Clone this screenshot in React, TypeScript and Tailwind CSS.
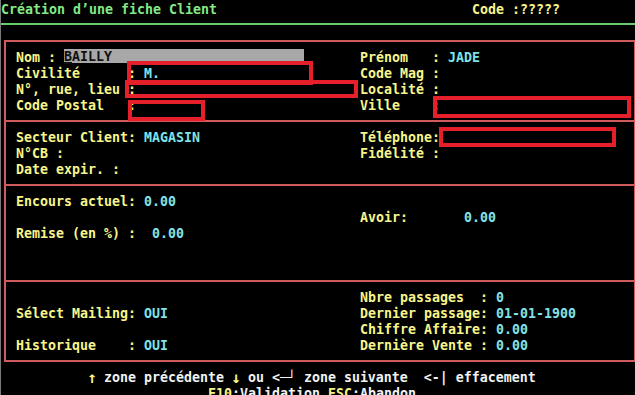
const Y = "text-[#f8f48c]"
const C = "text-[#7ee2ea]"

function Row({ left, right }: { left?: React.ReactNode; right?: React.ReactNode }) {
  return (
    <div className="flex h-4 items-center whitespace-pre">
      <div className="w-[344px] flex items-center translate-y-[2px]">{left}</div>
      <div className="flex items-center translate-y-[2px]">{right}</div>
    </div>
  )
}

function Mark({ className }: { className: string }) {
  return <div className={`absolute border-4 border-[#e6202a] ${className}`} />
}

function Arrow({ ch }: { ch: string }) {
  return <span className={`inline-flex w-2 justify-center overflow-visible text-[16px] leading-4 ${Y}`}>{ch}</span>
}

export default function App() {
  return (
    <div
      className="relative w-[635px] h-[395px] overflow-hidden bg-black border-l border-[#7a7a7a] font-bold text-[13.29px] leading-4"
      style={{ fontFamily: '"DejaVu Sans Mono", "Liberation Mono", monospace' }}
    >
      {/* title */}
      <div className="flex h-4 items-center whitespace-pre translate-y-[2px]">
        <div className="w-[471px] text-[#84e884]">Création d’une fiche Client</div>
        <div className={Y}>Code :?????</div>
      </div>
      <div className="flex h-4 items-center">
        <div className="h-[2px] w-full bg-[#6ccc6c]" />
      </div>

      {/* form box */}
      <div className="mt-2 ml-[3px] w-[632px] border-2 border-[#d05a5e]">
        <div className="pt-[6px] pb-[8px] pl-[10px] border-b-2 border-[#d05a5e]">
          <Row
            left={
              <>
                <span className={Y}>Nom : </span>
                <span className="flex h-[14px] w-[240px] -translate-y-[2px] items-center bg-[#a8a8a8] text-[#101010]">
                  <span className="translate-y-[1px]">
                    <span className="underline decoration-2 underline-offset-1">B</span>AILLY
                  </span>
                </span>
              </>
            }
            right={
              <>
                <span className={Y}>Prénom   : </span>
                <span className={C}>JADE</span>
              </>
            }
          />
          <Row
            left={
              <>
                <span className={Y}>Civilité      : </span>
                <span className={C}>M.</span>
              </>
            }
            right={<span className={Y}>Code Mag :</span>}
          />
          <Row left={<span className={Y}>N°, rue, lieu :</span>} right={<span className={Y}>Localité :</span>} />
          <Row left={<span className={Y}>Code Postal   :</span>} right={<span className={Y}>Ville    :</span>} />
        </div>

        <div className="pt-[6px] pb-[8px] pl-[10px] border-b-2 border-[#d05a5e]">
          <Row
            left={
              <>
                <span className={Y}>Secteur Client: </span>
                <span className={C}>MAGASIN</span>
              </>
            }
            right={<span className={Y}>Téléphone:</span>}
          />
          <Row left={<span className={Y}>N°CB :</span>} right={<span className={Y}>Fidélité :</span>} />
          <Row left={<span className={Y}>Date expir. :</span>} />
        </div>

        <div className="pt-[6px] pb-[8px] pl-[10px] border-b-2 border-[#d05a5e]">
          <Row
            left={
              <>
                <span className={Y}>Encours actuel: </span>
                <span className={C}>0.00</span>
              </>
            }
          />
          <Row
            right={
              <>
                <span className={Y}>Avoir:       </span>
                <span className={C}>0.00</span>
              </>
            }
          />
          <Row
            left={
              <>
                <span className={Y}>Remise (en %) :  </span>
                <span className={C}>0.00</span>
              </>
            }
          />
          <Row />
          <Row />
        </div>

        <div className="pt-[6px] pb-[8px] pl-[10px]">
          <Row
            right={
              <>
                <span className={Y}>Nbre passages  : </span>
                <span className={C}>0</span>
              </>
            }
          />
          <Row
            left={
              <>
                <span className={Y}>Sélect Mailing: </span>
                <span className={C}>OUI</span>
              </>
            }
            right={
              <>
                <span className={Y}>Dernier passage: </span>
                <span className={C}>01-01-1900</span>
              </>
            }
          />
          <Row
            right={
              <>
                <span className={Y}>Chiffre Affaire: </span>
                <span className={C}>0.00</span>
              </>
            }
          />
          <Row
            left={
              <>
                <span className={Y}>Historique    : </span>
                <span className={C}>OUI</span>
              </>
            }
            right={
              <>
                <span className={Y}>Dernière Vente : </span>
                <span className={C}>0.00</span>
              </>
            }
          />
        </div>
      </div>

      {/* footer */}
      <div className="mt-[6px] flex h-4 items-center whitespace-pre pl-[87px] text-[#f2f2f2] translate-y-[2px]">
        <Arrow ch="↑" /> zone précédente <Arrow ch="↓" /> ou &lt;─┘ zone suivante  &lt;-| effacement
      </div>
      <div className="flex h-4 items-center whitespace-pre pl-[207px] text-[#f2f2f2] translate-y-[2px]">
        <span className={Y}>F10</span>:Validation <span className={Y}>ESC</span>:Abandon
      </div>

      {/* red annotation frames */}
      <Mark className="left-[126px] top-[61px] w-[186px] h-[24px]" />
      <Mark className="left-[124px] top-[80px] w-[233px] h-[18px]" />
      <Mark className="left-[127px] top-[100px] w-[77px] h-[21px]" />
      <Mark className="left-[432px] top-[96px] w-[198px] h-[22px]" />
      <Mark className="left-[438px] top-[127px] w-[177px] h-[20px]" />
    </div>
  )
}
